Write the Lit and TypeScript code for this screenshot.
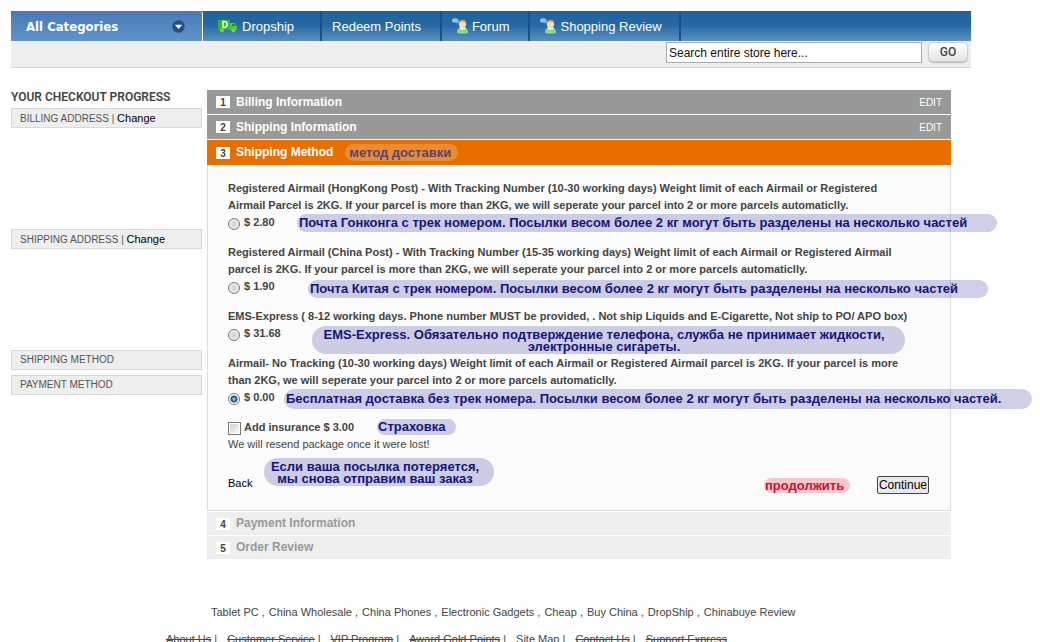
import { LitElement, html, css, svg } from "lit";
import { customElement, state } from "lit/decorators.js";

interface Method {
  id: string;
  lines: string[];
  price: string;
  note: string[];
}

const METHODS: Method[] = [
  {
    id: "hongkong",
    lines: [
      "Registered Airmail (HongKong Post) - With Tracking Number (10-30 working days) Weight limit of each Airmail or Registered",
      "Airmail Parcel is 2KG. If your parcel is more than 2KG, we will seperate your parcel into 2 or more parcels automaticlly.",
    ],
    price: "$ 2.80",
    note: ["Почта Гонконга с трек номером. Посылки весом более 2 кг могут быть разделены на несколько частей"],
  },
  {
    id: "china",
    lines: [
      "Registered Airmail (China Post) - With Tracking Number (15-35 working days) Weight limit of each Airmail or Registered Airmail",
      "parcel is 2KG. If your parcel is more than 2KG, we will seperate your parcel into 2 or more parcels automaticlly.",
    ],
    price: "$ 1.90",
    note: ["Почта Китая с трек номером. Посылки весом более 2 кг могут быть разделены на несколько частей"],
  },
  {
    id: "ems",
    lines: [
      "EMS-Express ( 8-12 working days. Phone number MUST be provided, . Not ship Liquids and E-Cigarette, Not ship to PO/ APO box)",
    ],
    price: "$ 31.68",
    note: ["EMS-Express. Обязательно подтверждение телефона, служба не принимает жидкости,", "электронные сигареты."],
  },
  {
    id: "free",
    lines: [
      "Airmail- No Tracking (10-30 working days) Weight limit of each Airmail or Registered Airmail parcel is 2KG. If your parcel is more",
      "than 2KG, we will seperate your parcel into 2 or more parcels automaticlly.",
    ],
    price: "$ 0.00",
    note: ["Бесплатная доставка без трек номера. Посылки весом более 2 кг могут быть разделены на несколько частей."],
  },
];

const KEYWORDS = ["Tablet PC", "China Wholesale", "China Phones", "Electronic Gadgets", "Cheap", "Buy China", "DropShip", "Chinabuye Review"];

const LINKS = ["About Us", "Customer Service", "VIP Program", "Award Gold Points", "Site Map", "Contact Us", "Support Express"];

const person = svg`<svg class="icon" width="16" height="16" viewBox="0 0 16 16" aria-hidden="true">
  <ellipse cx="3.2" cy="2.4" rx="3.2" ry="2.200" fill="#8fc4f2"/>
  <circle cx="5.200" cy="3.600" r="1.800" fill="#7db8ee"/>
  <path d="M5 15c0-4 1.600-5.500 5.500-5.500S16 11 16 15c-3 1-8 1-11 0z" fill="#8fd67c"/>
  <path d="M7 10c1.500 2.200 5.500 2.200 7 0l-1-.8H8z" fill="#eefae2"/>
  <circle cx="10.500" cy="6" r="3.700" fill="#f8dcb6"/>
  <path d="M6.800 6c0-3 1.500-4.200 3.700-4.200s3.800 1.200 3.700 4.200c-.8-1.600-2-2.400-3.700-2.400S7.500 4.400 6.800 6z" fill="#c79a5c"/>
</svg>`;

const truck = svg`<svg class="icon" width="20" height="14" viewBox="0 0 20 14" aria-hidden="true">
  <path d="M0 1h12v10H0z" fill="#35b52f"/>
  <path d="M12 4h4l3 3v4h-7z" fill="#4ccb38"/>
  <path d="M14 5h2l2 2h-4z" fill="#1f8a3a"/>
  <path d="M5 2.500v6h1.500c3.500 0 3.500-6 0-6z" fill="none" stroke="#f2fff0" stroke-width="1.600"/>
  <circle cx="4" cy="11.500" r="2" fill="#5fe04a"/>
  <circle cx="15.500" cy="11.500" r="2" fill="#5fe04a"/>
</svg>`;

@customElement("app-root")
export class AppRoot extends LitElement {
  @state() private selected = "free";

  static styles = css`
    :host {
      display: block;
      box-sizing: border-box;
      padding: 11px 0 0 11px;
      background: #fefefe;
      color: #444;
      font: 11px/17px "Liberation Sans", Arial, sans-serif;
    }
    a { color: inherit; text-decoration: none; }
    h1, h2, ul, ol, p { margin: 0; padding: 0; font: inherit; list-style: none; }
    .page { max-width: 960px; }

    .nav {
      display: flex;
      height: 30px;
      background: linear-gradient(#22629b, #2468a4 45%, #5a8fc0);
    }
    .categories {
      display: flex;
      align-items: center;
      justify-content: space-between;
      box-sizing: border-box;
      width: 192px;
      padding: 0 17px 0 15px;
      border: 0;
      border-right: 1px solid #fff;
      border-radius: 3px 3px 0 0;
      background: linear-gradient(#4a7ab5, #5e93cb);
      color: #fff;
      font: bold 13px "DejaVu Sans Condensed", "DejaVu Sans", sans-serif;
    }
    .tabs { display: flex; }
    .tab {
      display: flex;
      align-items: center;
      gap: 4px;
      box-sizing: border-box;
      padding: 0 19px 0 10px;
      border-right: 2px solid #1b4f8c;
      color: #fff;
      font-size: 13px;
    }
    .tab.first { padding: 0 26px 0 15px; }
    .tab.last { padding-right: 17px; }
    .icon { display: block; flex: none; }

    .searchbar {
      display: flex;
      justify-content: flex-end;
      align-items: flex-start;
      gap: 6px;
      box-sizing: border-box;
      height: 27px;
      padding: 1px 3px 0 0;
      border-bottom: 1px solid #d6d6d6;
      background: #eee;
    }
    .search {
      box-sizing: border-box;
      width: 256px;
      height: 21px;
      padding: 0 2px;
      border: 1px solid #a5acb2;
      border-radius: 0;
      background: #fff;
      color: #111;
      font: 12px "Liberation Sans", Arial, sans-serif;
    }
    .go {
      box-sizing: border-box;
      width: 40px;
      height: 20px;
      padding: 0;
      border: 1px solid #ccc;
      border-radius: 5px;
      background: linear-gradient(#fff, #e4e4e4);
      box-shadow: 0 1px 1px #bbb;
      color: #444;
      font: 500 12px "Roboto", sans-serif;
    }

    .columns {
      display: grid;
      grid-template-columns: 191px minmax(0, 1fr);
      gap: 5px;
      padding: 22px 20px 0 0;
    }
    .title {
      height: 18px;
      line-height: 14px;
      font-size: 12px;
      font-weight: 600;
      font-family: "Roboto", sans-serif;
    }
    .step {
      box-sizing: border-box;
      height: 20px;
      padding: 0 8px;
      border: 1px solid #d8d8d8;
      background: #eee;
      color: #555;
      font-size: 10px;
      line-height: 18px;
    }
    .entry.filled { padding-bottom: 101px; }
    .entry.short { padding-bottom: 5px; }
    .change { color: #000; font-size: 11px; }

    .head {
      display: flex;
      align-items: center;
      box-sizing: border-box;
      height: 25px;
      padding: 0 9px;
      gap: 6px;
      border-bottom: 1px solid #fff;
      background: #999;
      color: #fff;
      font-size: 12px;
      font-weight: bold;
    }
    .head.active { border-bottom: 0; background: #e76f00; }
    .head.later { height: 24px; background: #eee; color: #999; }
    .number {
      width: 14px;
      height: 12px;
      background: #fff;
      color: #444;
      font-size: 10px;
      line-height: 13px;
      text-align: center;
    }
    .edit { margin-left: auto; font-size: 10px; font-weight: normal; }

    .body {
      padding: 15px 20px 16px;
      border: 1px solid #ddd;
      border-top: 0;
      margin-bottom: 1px;
      background: #fbfbfb;
    }
    .method { padding-bottom: 13px; font-weight: bold; white-space: nowrap; }
    .choice { position: relative; display: flex; height: 17px; gap: 4px; }
    .radio, .check {
      appearance: none;
      flex: none;
      box-sizing: border-box;
      margin: 4px 0 0;
      width: 12px;
      height: 12px;
      border: 1px solid #777;
    }
    .radio { border-radius: 50%; background: radial-gradient(#ccc, #eee 70%); }
    .radio:checked { background: radial-gradient(circle at center, #5cc8e8 0 1px, #123f66 3px, #fff 4px); }
    .check { width: 13px; height: 13px; margin: 3px 0 0; background: linear-gradient(135deg, #ccc, #fff); box-shadow: inset 0 0 0 1px #fff; }
    .insurance { gap: 3px; font-weight: bold; }

    .note {
      box-sizing: border-box;
      border-radius: 14px;
      background: rgba(20, 20, 140, 0.2);
      color: #14147a;
      font-size: 13px;
      font-weight: bold;
      line-height: 18px;
      white-space: nowrap;
    }
    .choice .note { position: absolute; top: 0; padding: 0 7px 0 2px; }
    .choice .hongkong { left: 69px; min-width: 700px; }
    .choice .china { left: 80px; top: 2px; min-width: 680px; }
    .choice .ems { left: 84px; top: 1px; min-width: 593px; padding: 3px 11px 1px 2px; line-height: 12px; text-align: center; }
    .choice .free { left: 56px; min-width: 748px; padding: 1px 6px 1px 2px; }
    .choice .insured { left: 149px; min-width: 79px; padding: 0 7px 0 1px; line-height: 16px; }
    .head .note { min-width: 113px; margin-left: 6px; padding: 0 4px; line-height: 17px; background: rgba(255, 255, 255, 0.2); color: #5b4468; }

    .actions { position: relative; display: flex; align-items: center; height: 18px; padding-top: 23px; }
    .back { align-self: flex-start; color: #000; line-height: 14px; }
    .actions .note.lost { position: absolute; left: 36px; top: 5px; min-width: 230px; padding: 3px 11px 1px 3px; line-height: 12px; text-align: center; }
    .actions .note.go-on { min-width: 86px; margin-left: auto; padding: 0 4px 0 1px; line-height: 15px; background: #f9c6cc; color: #c4142c; }
    .continue {
      box-sizing: border-box;
      height: 18px;
      margin: 0 1px 0 27px;
      padding: 0 1px;
      border: 1px solid #444;
      border-radius: 2px;
      background: #e8e8ee;
      color: #000;
      font: 12px/16px "Liberation Sans", Arial, sans-serif;
    }

    .footer { padding: 44px 20px 0 155px; white-space: nowrap; }
    .keywords { display: flex; gap: 4px; padding-left: 45px; }
    .links { display: flex; gap: 10px; padding-top: 10px; }
    .struck { text-decoration: line-through; }
  `;

  private renderHead(n: number, title: string, kind: string, extra: unknown = "") {
    return html`<h2 class="head ${kind}"><span class="number">${n}</span><span>${title}</span>${extra}</h2>`;
  }

  private renderMethod(m: Method) {
    return html`<li class="method">
      ${m.lines.map((line) => html`<p>${line}</p>`)}
      <div class="choice">
        <input class="radio" type="radio" name="method" id=${m.id} .checked=${this.selected === m.id}
          @change=${() => (this.selected = m.id)} />
        <label for=${m.id}>${m.price}</label>
        <div class="note ${m.id}">${m.note.map((line) => html`<div>${line}</div>`)}</div>
      </div>
    </li>`;
  }

  render() {
    const edit = html`<a class="edit" href="#">EDIT</a>`;
    return html`
      <div class="page">
        <header>
          <nav class="nav">
            <button class="categories" type="button">
              All Categories
              <svg class="icon" width="13" height="13" viewBox="0 0 13 13" aria-hidden="true">
                <circle cx="6.500" cy="6.500" r="6.200" fill="#234f83" />
                <path d="M2.800 4.800h7.400L6.500 9z" fill="#fff" />
              </svg>
            </button>
            <div class="tabs">
              <a class="tab first" href="#">${truck}Dropship</a>
              <a class="tab" href="#">Redeem Points</a>
              <a class="tab" href="#">${person}Forum</a>
              <a class="tab last" href="#">${person}Shopping Review</a>
            </div>
          </nav>
          <form class="searchbar" @submit=${(e: Event) => e.preventDefault()}>
            <input class="search" type="text" aria-label="Search" value="Search entire store here..." />
            <button class="go">GO</button>
          </form>
        </header>
        <div class="columns">
          <aside>
            <h1 class="title">YOUR CHECKOUT PROGRESS</h1>
            <div class="entry filled"><div class="step">BILLING ADDRESS | <a class="change" href="#">Change</a></div></div>
            <div class="entry filled"><div class="step">SHIPPING ADDRESS | <a class="change" href="#">Change</a></div></div>
            <div class="entry short"><div class="step">SHIPPING METHOD</div></div>
            <div class="entry short"><div class="step">PAYMENT METHOD</div></div>
          </aside>
          <main>
            ${this.renderHead(1, "Billing Information", "", edit)}
            ${this.renderHead(2, "Shipping Information", "", edit)}
            ${this.renderHead(3, "Shipping Method", "active", html`<span class="note">метод доставки</span>`)}
            <div class="body">
              <ul>${METHODS.map((m) => this.renderMethod(m))}</ul>
              <div class="choice insurance">
                <input class="check" type="checkbox" id="insurance" />
                <label for="insurance">Add insurance $ 3.00</label>
                <div class="note insured">Страховка</div>
              </div>
              <p>We will resend package once it were lost!</p>
              <div class="actions">
                <a class="back" href="#">Back</a>
                <div class="note lost"><div>Если ваша посылка потеряется,</div><div>мы снова отправим ваш заказ</div></div>
                <span class="note go-on">продолжить</span>
                <button class="continue" type="button">Continue</button>
              </div>
            </div>
            ${this.renderHead(4, "Payment Information", "later")}
            ${this.renderHead(5, "Order Review", "later")}
          </main>
        </div>
        <footer class="footer">
          <div class="keywords">
            ${KEYWORDS.map((k, i) => html`<span><a href="#">${k}</a>${i < KEYWORDS.length - 1 ? " ," : ""}</span>`)}
          </div>
          <div class="links">
            ${LINKS.map((k, i) => html`<span><a class=${k === "Site Map" ? "" : "struck"} href="#">${k}</a>${i < LINKS.length - 1 ? " |" : ""}</span>`)}
          </div>
        </footer>
      </div>
    `;
  }
}
